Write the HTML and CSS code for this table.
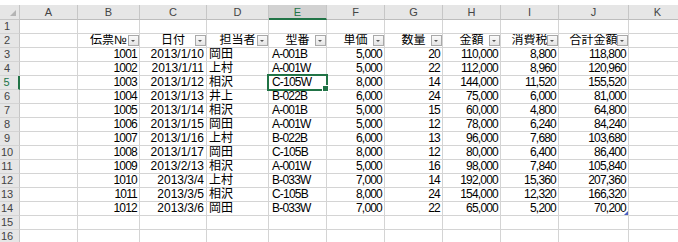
FILE: index.html
```html
<!DOCTYPE html>
<html lang="ja">
<head>
  <meta charset="UTF-8" />
  <title>売上一覧</title>
  <link rel="stylesheet" href="styles.css">
</head>
<body>
  <div class="sheet">
    <!-- 列見出し -->
    <div class="corner"><span class="tri"></span></div>
    <div class="ch">A</div><div class="ch">B</div><div class="ch">C</div><div class="ch">D</div><div class="ch sel">E</div><div class="ch">F</div><div class="ch">G</div><div class="ch">H</div><div class="ch">I</div><div class="ch">J</div><div class="ch">K</div>

    <div class="rh">1</div><div class="c"></div><div class="c"></div><div class="c"></div><div class="c"></div><div class="c"></div><div class="c"></div><div class="c"></div><div class="c"></div><div class="c"></div><div class="c"></div><div class="c"></div>

    <div class="rh">2</div><div class="c"></div>
    <div class="c hd">伝票№<span class="fb"></span></div>
    <div class="c hd">日付<span class="fb"></span></div>
    <div class="c hd">担当者<span class="fb"></span></div>
    <div class="c hd">型番<span class="fb"></span></div>
    <div class="c hd">単価<span class="fb"></span></div>
    <div class="c hd">数量<span class="fb"></span></div>
    <div class="c hd">金額<span class="fb"></span></div>
    <div class="c hd">消費税<span class="fb"></span></div>
    <div class="c hd">合計金額<span class="fb"></span></div>
    <div class="c"></div>

    <div class="rh">3</div><div class="c"></div><div class="c n">1001</div><div class="c d">2013/1/10</div><div class="c t">岡田</div><div class="c t m">A-001B</div><div class="c n">5,000</div><div class="c n">20</div><div class="c n">110,000</div><div class="c n">8,800</div><div class="c n">118,800</div><div class="c"></div>
    <div class="rh">4</div><div class="c"></div><div class="c n">1002</div><div class="c d">2013/1/11</div><div class="c t">上村</div><div class="c t m">A-001W</div><div class="c n">5,000</div><div class="c n">22</div><div class="c n">112,000</div><div class="c n">8,960</div><div class="c n">120,960</div><div class="c"></div>
    <div class="rh active">5</div><div class="c"></div><div class="c n">1003</div><div class="c d">2013/1/12</div><div class="c t">相沢</div><div class="c t m current">C-105W</div><div class="c n">8,000</div><div class="c n">14</div><div class="c n">144,000</div><div class="c n">11,520</div><div class="c n">155,520</div><div class="c"></div>
    <div class="rh">6</div><div class="c"></div><div class="c n">1004</div><div class="c d">2013/1/13</div><div class="c t">井上</div><div class="c t m">B-022B</div><div class="c n">6,000</div><div class="c n">24</div><div class="c n">75,000</div><div class="c n">6,000</div><div class="c n">81,000</div><div class="c"></div>
    <div class="rh">7</div><div class="c"></div><div class="c n">1005</div><div class="c d">2013/1/14</div><div class="c t">相沢</div><div class="c t m">A-001B</div><div class="c n">5,000</div><div class="c n">15</div><div class="c n">60,000</div><div class="c n">4,800</div><div class="c n">64,800</div><div class="c"></div>
    <div class="rh">8</div><div class="c"></div><div class="c n">1006</div><div class="c d">2013/1/15</div><div class="c t">岡田</div><div class="c t m">A-001W</div><div class="c n">5,000</div><div class="c n">12</div><div class="c n">78,000</div><div class="c n">6,240</div><div class="c n">84,240</div><div class="c"></div>
    <div class="rh">9</div><div class="c"></div><div class="c n">1007</div><div class="c d">2013/1/16</div><div class="c t">上村</div><div class="c t m">B-022B</div><div class="c n">6,000</div><div class="c n">13</div><div class="c n">96,000</div><div class="c n">7,680</div><div class="c n">103,680</div><div class="c"></div>
    <div class="rh">10</div><div class="c"></div><div class="c n">1008</div><div class="c d">2013/1/17</div><div class="c t">岡田</div><div class="c t m">C-105B</div><div class="c n">8,000</div><div class="c n">12</div><div class="c n">80,000</div><div class="c n">6,400</div><div class="c n">86,400</div><div class="c"></div>
    <div class="rh">11</div><div class="c"></div><div class="c n">1009</div><div class="c d">2013/2/13</div><div class="c t">相沢</div><div class="c t m">A-001W</div><div class="c n">5,000</div><div class="c n">16</div><div class="c n">98,000</div><div class="c n">7,840</div><div class="c n">105,840</div><div class="c"></div>
    <div class="rh">12</div><div class="c"></div><div class="c n">1010</div><div class="c d">2013/3/4</div><div class="c t">上村</div><div class="c t m">B-033W</div><div class="c n">7,000</div><div class="c n">14</div><div class="c n">192,000</div><div class="c n">15,360</div><div class="c n">207,360</div><div class="c"></div>
    <div class="rh">13</div><div class="c"></div><div class="c n">1011</div><div class="c d">2013/3/5</div><div class="c t">相沢</div><div class="c t m">C-105B</div><div class="c n">8,000</div><div class="c n">24</div><div class="c n">154,000</div><div class="c n">12,320</div><div class="c n">166,320</div><div class="c"></div>
    <div class="rh">14</div><div class="c"></div><div class="c n">1012</div><div class="c d">2013/3/6</div><div class="c t">岡田</div><div class="c t m">B-033W</div><div class="c n">7,000</div><div class="c n">22</div><div class="c n">65,000</div><div class="c n">5,200</div><div class="c n table-end">70,200</div><div class="c"></div>

    <div class="rh">15</div><div class="c"></div><div class="c"></div><div class="c"></div><div class="c"></div><div class="c"></div><div class="c"></div><div class="c"></div><div class="c"></div><div class="c"></div><div class="c"></div><div class="c"></div>
    <div class="rh">16</div><div class="c"></div><div class="c"></div><div class="c"></div><div class="c"></div><div class="c"></div><div class="c"></div><div class="c"></div><div class="c"></div><div class="c"></div><div class="c"></div><div class="c"></div>
  </div>
</body>
</html>
```

FILE: styles.css
```css
* {
  box-sizing: border-box;
  margin: 0;
  padding: 0;
}

body {
  width: 678px;
  height: 242px;
  overflow: hidden;
  background: #fff;
  font-family: "Liberation Sans", "Noto Sans CJK JP", sans-serif;
  font-size: 12px;
  color: #000;
}

.sheet {
  display: grid;
  grid-template-columns: 20px 58px 62px 67px 62px 58px 58px 58px 58px 58px 70px 58px;
  grid-template-rows: 15px;
  grid-auto-rows: 14px;
  padding-top: 5px;
  width: 687px;
}

/* 見出し */
.corner,
.ch,
.rh {
  background: #e6e6e6;
  color: #444;
  font-size: 11px;
  border-right: 1px solid #c6c6c6;
  border-bottom: 1px solid #c6c6c6;
}

.corner {
  position: relative;
}

.tri {
  position: absolute;
  right: 3px;
  bottom: 3px;
  width: 0;
  height: 0;
  border-left: 6px solid transparent;
  border-bottom: 6px solid #b4b4b4;
}

.ch {
  text-align: center;
  line-height: 14px;
  border-bottom-color: #bdbdbd;
}

.ch.sel {
  background: #d2d2d2;
  color: #217346;
  border-bottom: 2px solid #217346;
}

.rh {
  text-align: center;
  padding-right: 5px;
  line-height: 13px;
  border-bottom-color: #d4d4d4;
}

.rh.active {
  color: #217346;
  border-right: 2px solid #217346;
}

/* セル */
.c {
  position: relative;
  border-right: 1px solid #d4d4d4;
  border-bottom: 1px solid #d4d4d4;
  line-height: 13px;
  white-space: nowrap;
  padding: 0 2px;
}

.c.n {
  text-align: right;
  letter-spacing: -0.8px;
  padding-right: 2px;
}

.c.d {
  text-align: right;
}

.c.t {
  text-align: left;
  padding-left: 2px;
}

.c.m {
  letter-spacing: -0.8px;
  padding-left: 3px;
}

.c.hd {
  text-align: center;
  overflow: hidden;
  padding: 0;
}

/* フィルターボタン */
.fb {
  position: absolute;
  top: 1px;
  right: 0;
  width: 11px;
  height: 11px;
  border: 1px solid #a9a9a9;
  background: linear-gradient(#fbfbfb, #e4e4e4);
}

.fb::after {
  content: "";
  position: absolute;
  left: 2px;
  top: 4px;
  border-top: 2px solid #555;
  border-left: 2.5px solid transparent;
  border-right: 2.5px solid transparent;
}

/* 選択中のセル */
.current::after {
  content: "";
  position: absolute;
  inset: -2px;
  border: 2px solid #217346;
  z-index: 2;
}

.current::before {
  content: "";
  position: absolute;
  right: -3px;
  bottom: -3px;
  width: 5px;
  height: 5px;
  background: #217346;
  border: 1px solid #fff;
  z-index: 3;
}

.table-end::after {
  content: "";
  position: absolute;
  right: 0;
  bottom: 0;
  width: 0;
  height: 0;
  border-left: 4px solid transparent;
  border-bottom: 4px solid #4a5fc1;
}
```
